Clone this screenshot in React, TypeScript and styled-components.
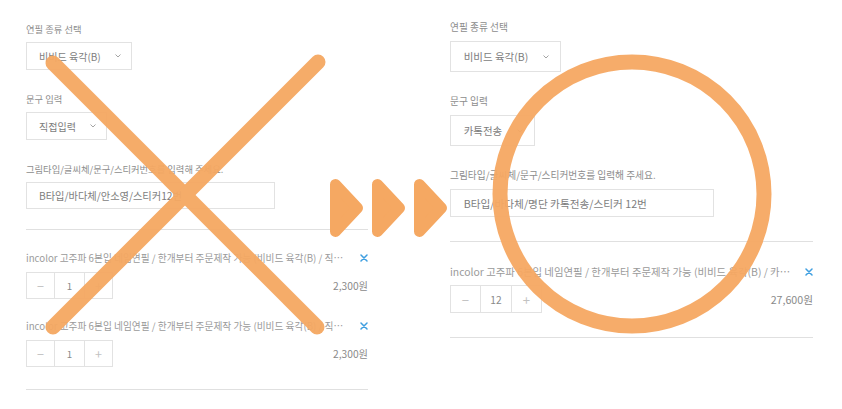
import React from "react";
import styled, { createGlobalStyle } from "styled-components";

//  metrics for the two form panels
// ----------------------------------------------
type Metrics = {
  s: number;
  top: number;
  width: number;
  font: number;
  titleFont: number;
  label: number;
  labelGap: number;
  gap: number;
  lastGap: number;
  selectH: number;
  inputH: number;
  inputW: number;
  qtyH: number;
  qtySide: number;
  qtyMid: number;
  listPadTop: number;
  listPadBottom: number;
  itemGap: number;
  titleGap: number;
};

const LEFT: Metrics = {
  s: 1,
  top: 22,
  width: 342,
  font: 9.3,
  titleFont: 9.7,
  label: 14,
  labelGap: 6,
  gap: 22,
  lastGap: 20,
  selectH: 28,
  inputH: 27,
  inputW: 249,
  qtyH: 27,
  qtySide: 27,
  qtyMid: 29,
  listPadTop: 21,
  listPadBottom: 22,
  itemGap: 20,
  titleGap: 7,
};

const RIGHT: Metrics = {
  s: 1.06,
  top: 20,
  width: 363,
  font: 9.7,
  titleFont: 10.4,
  label: 15,
  labelGap: 6,
  gap: 22,
  lastGap: 24,
  selectH: 31,
  inputH: 28,
  inputW: 264,
  qtyH: 28,
  qtySide: 29,
  qtyMid: 30,
  listPadTop: 22,
  listPadBottom: 24,
  itemGap: 20,
  titleGap: 6,
};

const ORANGE = "#f5a862";

//  styled-components
// ----------------------------------------------
const GlobalStyle = createGlobalStyle`
  html, body {
    margin: 0;
    padding: 0;
    background: #fff;
  }
  body {
    font-family: "Noto Sans CJK KR", "Noto Sans", sans-serif;
  }
`;

const Stage = styled.div`
  position: relative;
  width: 842px;
  height: 409px;
  overflow: hidden;
  display: flex;
  gap: 82px;
  padding-left: 26px;
  box-sizing: border-box;
`;

const Panel = styled.div<{ $m: Metrics }>`
  display: flex;
  flex-direction: column;
  width: ${(p) => p.$m.width}px;
  padding-top: ${(p) => p.$m.top}px;
  font-size: ${(p) => p.$m.font}px;
`;

const Field = styled.div<{ $gap: number }>`
  display: flex;
  flex-direction: column;
  align-items: flex-start;
  margin-bottom: ${(p) => p.$gap}px;
`;

const Label = styled.div<{ $m: Metrics }>`
  height: ${(p) => p.$m.label}px;
  line-height: ${(p) => p.$m.label}px;
  margin-bottom: ${(p) => p.$m.labelGap}px;
  color: #8d8d8d;
  white-space: nowrap;
`;

const Select = styled.div<{ $m: Metrics }>`
  display: inline-flex;
  align-items: center;
  gap: ${(p) => 14 * p.$m.s}px;
  height: ${(p) => p.$m.selectH}px;
  padding: 0 ${(p) => 10 * p.$m.s}px 0 ${(p) => 12 * p.$m.s}px;
  border: 1px solid #e2e2e2;
  box-sizing: border-box;
  color: #7d7d7d;
  font-size: 1.08em;
  white-space: nowrap;
`;

const Chevron = styled.svg`
  width: 6px;
  height: 4px;
  display: block;
`;

const TextInput = styled.input<{ $m: Metrics }>`
  width: ${(p) => p.$m.inputW}px;
  height: ${(p) => p.$m.inputH}px;
  box-sizing: border-box;
  border: 1px solid #e2e2e2;
  padding: 0 ${(p) => 12 * p.$m.s}px;
  font: inherit;
  font-size: 1.1em;
  color: #7d7d7d;
  outline: none;
  background: #fff;
`;

const ItemList = styled.div<{ $m: Metrics }>`
  display: flex;
  flex-direction: column;
  gap: ${(p) => p.$m.itemGap}px;
  border-top: 1px solid #e0e0e0;
  border-bottom: 1px solid #e0e0e0;
  padding: ${(p) => p.$m.listPadTop}px 0 ${(p) => p.$m.listPadBottom}px;
`;

const Item = styled.div<{ $m: Metrics }>`
  display: flex;
  flex-direction: column;
  gap: ${(p) => p.$m.titleGap}px;
`;

const TitleRow = styled.div<{ $m: Metrics }>`
  display: flex;
  align-items: center;
  height: ${(p) => p.$m.label}px;
  gap: 11px;
`;

const Title = styled.div<{ $m: Metrics }>`
  flex: 1;
  min-width: 0;
  color: #9a9a9a;
  font-size: ${(p) => p.$m.titleFont}px;
  white-space: nowrap;
  overflow: hidden;
  text-overflow: ellipsis;
`;

const RemoveIcon = styled.svg`
  width: 8px;
  height: 8px;
  flex-shrink: 0;
  display: block;
`;

const QtyRow = styled.div`
  display: flex;
  align-items: center;
  justify-content: space-between;
`;

const Stepper = styled.div<{ $m: Metrics }>`
  display: flex;
  height: ${(p) => p.$m.qtyH}px;
  border: 1px solid #e2e2e2;
  box-sizing: border-box;
`;

const StepCell = styled.div<{ $w: number; $value?: boolean }>`
  width: ${(p) => p.$w}px;
  display: flex;
  align-items: center;
  justify-content: center;
  color: ${(p) => (p.$value ? "#8a8a8a" : "#c2c2c2")};
  font-size: ${(p) => (p.$value ? "1.05em" : "1.35em")};
  & + & {
    border-left: 1px solid #e2e2e2;
  }
`;

const Price = styled.div`
  color: #8a8a8a;
  font-size: 1.1em;
  white-space: nowrap;
`;

//  overlay marks
const Mark = styled.svg<{ $x: number; $y: number }>`
  position: absolute;
  left: ${(p) => p.$x}px;
  top: ${(p) => p.$y}px;
  pointer-events: none;
  overflow: visible;
`;

const Arrows = styled.div`
  position: absolute;
  left: 330px;
  top: 179px;
  display: flex;
  gap: 9px;
  pointer-events: none;
`;

// ----------------------------------------------
const ChevronDown = () => (
  <Chevron viewBox="0 0 6 4">
    <polyline points="0.5,0.5 3,3 5.5,0.5" fill="none" stroke="#9a9a9a" strokeWidth="0.9" />
  </Chevron>
);

const Remove = () => (
  <RemoveIcon viewBox="0 0 8 8">
    <path d="M1 1L7 7M7 1L1 7" stroke="#3f9fe0" strokeWidth="1.5" strokeLinecap="round" />
  </RemoveIcon>
);

type ItemData = { title: string; qty: number; price: string };

const OrderItem = ({ m, item }: { m: Metrics; item: ItemData }) => (
  <Item $m={m}>
    <TitleRow $m={m}>
      <Title $m={m}>{item.title}</Title>
      <Remove />
    </TitleRow>
    <QtyRow>
      <Stepper $m={m}>
        <StepCell $w={m.qtySide}>−</StepCell>
        <StepCell $w={m.qtyMid} $value>
          {item.qty}
        </StepCell>
        <StepCell $w={m.qtySide}>+</StepCell>
      </Stepper>
      <Price>{item.price}</Price>
    </QtyRow>
  </Item>
);

type FormData = {
  pencil: string;
  phraseMode: string;
  phrase: string;
  items: ItemData[];
};

const OptionForm = ({ m, data }: { m: Metrics; data: FormData }) => (
  <Panel $m={m}>
    <Field $gap={m.gap}>
      <Label $m={m}>연필 종류 선택</Label>
      <Select $m={m}>
        {data.pencil}
        <ChevronDown />
      </Select>
    </Field>
    <Field $gap={m.gap}>
      <Label $m={m}>문구 입력</Label>
      <Select $m={m}>
        {data.phraseMode}
        <ChevronDown />
      </Select>
    </Field>
    <Field $gap={m.lastGap}>
      <Label $m={m}>그림타입/글씨체/문구/스티커번호를 입력해 주세요.</Label>
      <TextInput $m={m} readOnly value={data.phrase} />
    </Field>
    <ItemList $m={m}>
      {data.items.map((item, i) => (
        <OrderItem key={i} m={m} item={item} />
      ))}
    </ItemList>
  </Panel>
);

const wrong: FormData = {
  pencil: "비비드 육각(B)",
  phraseMode: "직접입력",
  phrase: "B타입/바다체/안소영/스티커12번",
  items: [
    {
      title: "incolor 고주파 6본입 네임연필 / 한개부터 주문제작 가능 (비비드 육각(B) / 직접입력 / B타입/바다체/안소영/스티커12번)",
      qty: 1,
      price: "2,300원",
    },
    {
      title: "incolor 고주파 6본입 네임연필 / 한개부터 주문제작 가능 (비비드 육각(B) / 직접입력 / B타입/바다체/홍길동/스티커3번)",
      qty: 1,
      price: "2,300원",
    },
  ],
};

const right: FormData = {
  pencil: "비비드 육각(B)",
  phraseMode: "카톡전송",
  phrase: "B타입/바다체/명단 카톡전송/스티커 12번",
  items: [
    {
      title: "incolor 고주파 6본입 네임연필 / 한개부터 주문제작 가능 (비비드 육각(B) / 카톡전송 / B타입/바다체/명단 카톡전송/스티커 12번)",
      qty: 12,
      price: "27,600원",
    },
  ],
};

const Triangle = () => (
  <svg width="33" height="58" viewBox="0 0 33 58">
    <polygon
      points="5.5,5.5 27.5,29 5.5,52.5"
      fill={ORANGE}
      stroke={ORANGE}
      strokeWidth="11"
      strokeLinejoin="round"
    />
  </svg>
);

const App = () => {
  return (
    <>
      <GlobalStyle />
      <Stage>
        <OptionForm m={LEFT} data={wrong} />
        <OptionForm m={RIGHT} data={right} />

        <Mark $x={40} $y={50} width="290" height="290" viewBox="0 0 290 290" opacity={0.95}>
          <g stroke={ORANGE} strokeWidth="15" strokeLinecap="round">
            <line x1="13" y1="13" x2="277" y2="277" />
            <line x1="278" y1="12" x2="13" y2="277" />
          </g>
        </Mark>

        <Arrows>
          <Triangle />
          <Triangle />
          <Triangle />
        </Arrows>

        <Mark $x={492} $y={54} width="280" height="280" viewBox="0 0 280 280" opacity={0.95}>
          <circle cx="140" cy="140" r="132" fill="none" stroke={ORANGE} strokeWidth="15" />
        </Mark>
      </Stage>
    </>
  );
};

export default App;
